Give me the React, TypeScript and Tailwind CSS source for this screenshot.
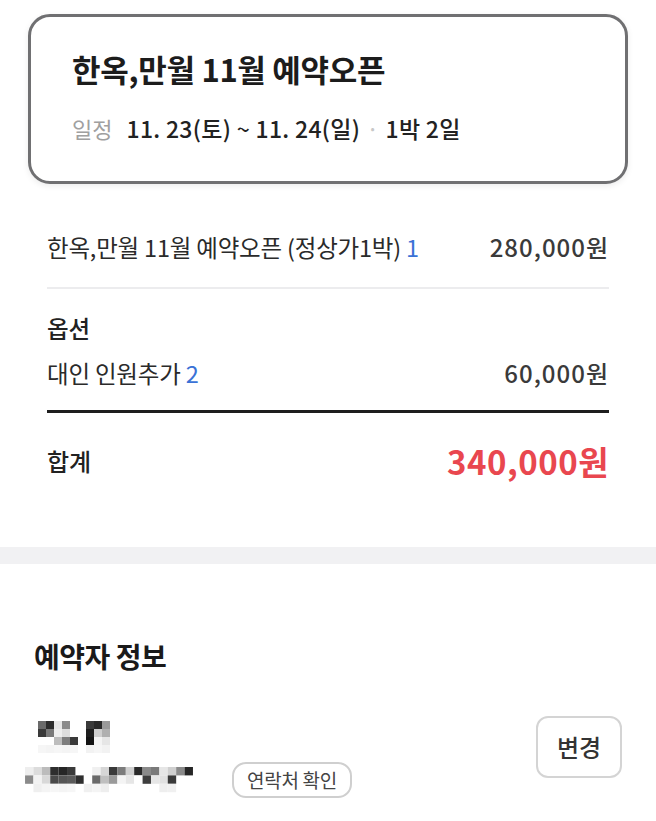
import React from 'react';

const FONT = '"Noto Sans CJK KR", "Noto Sans", sans-serif';

// mosaic cells: [col, row, color]
const nameCells: [number, number, string][] = [
  [0, 0, '#6a6a6a'], [1, 0, '#2c2c2c'], [2, 0, '#e6e6e6'], [3, 0, '#8a8a8a'], [6, 0, '#3a3a3a'], [7, 0, '#2a2a2a'], [8, 0, '#9a9a9a'],
  [0, 1, '#3a3a3a'], [1, 1, '#7a7a7a'], [2, 1, '#eeeeee'], [3, 1, '#dddddd'], [6, 1, '#1e1e1e'], [7, 1, '#cfcfcf'], [8, 1, '#b0b0b0'],
  [2, 2, '#bdbdbd'], [3, 2, '#7d7d7d'], [4, 2, '#3a3a3a'], [6, 2, '#141414'], [7, 2, '#f4f4f4'], [8, 2, '#e6e6e6'],
  [0, 3, '#f6f6f6'], [1, 3, '#f4f4f4'], [2, 3, '#f6f6f6'], [3, 3, '#f4f4f4'], [4, 3, '#f6f6f6'], [6, 3, '#f2f2f2'], [7, 3, '#f6f6f6'], [8, 3, '#f2f2f2'],
];

const phoneCells: [number, number, string][] = [
  [0, 0, '#eeeeee'], [1, 0, '#dcdcdc'], [2, 0, '#bcbcbc'], [3, 0, '#2e2e2e'], [4, 0, '#262626'], [5, 0, '#3a3a3a'], [8, 0, '#f0f0f0'], [9, 0, '#d6d6d6'],
  [10, 0, '#3a3a3a'], [11, 0, '#7c7c7c'], [12, 0, '#d0d0d0'], [13, 0, '#2a2a2a'], [14, 0, '#8a8a8a'], [15, 0, '#7a7a7a'], [16, 0, '#e6e6e6'], [17, 0, '#cfcfcf'], [18, 0, '#8a8a8a'], [19, 0, '#262626'],
  [0, 1, '#8a8a8a'], [1, 1, '#f2f2f2'], [2, 1, '#d8d8d8'], [3, 1, '#4a4a4a'], [4, 1, '#555555'], [5, 1, '#5a5a5a'], [6, 1, '#2e2e2e'], [7, 1, '#ffffff'], [8, 1, '#6a6a6a'], [9, 1, '#bfbfbf'],
  [10, 1, '#9a9a9a'], [11, 1, '#f4f4f4'], [12, 1, '#e6e6e6'], [13, 1, '#ffffff'], [14, 1, '#3e3e3e'], [15, 1, '#e6e6e6'], [16, 1, '#e0e0e0'], [17, 1, '#3a3a3a'],
  [1, 2, '#efefef'], [2, 2, '#f4f4f4'], [3, 2, '#f6f6f6'], [4, 2, '#f4f4f4'], [5, 2, '#f6f6f6'], [7, 2, '#f0f0f0'], [8, 2, '#f4f4f4'], [9, 2, '#eeeeee'], [16, 2, '#eeeeee'], [17, 2, '#f0f0f0'],
];

function Mosaic({ cells, cols, rows, cell }: { cells: [number, number, string][]; cols: number; rows: number; cell: number }) {
  return (
    <svg width={cols * cell} height={rows * cell} viewBox={`0 0 ${cols * cell} ${rows * cell}`} aria-hidden>
      {cells.map(([c, r, color], i) => (
        <rect key={i} x={c * cell} y={r * cell} width={cell} height={cell} fill={color} />
      ))}
    </svg>
  );
}

export default function App() {
  return (
    <div className="w-[656px] min-h-[821px] bg-white text-[#222]" style={{ fontFamily: FONT }}>
      {/* product card */}
      <div className="pt-[14px] px-[28px]">
        <div className="h-[170px] rounded-[22px] border-[3px] border-[#707072] pl-[41px] pt-[30px] shadow-[0_2px_6px_rgba(0,0,0,0.08)]">
          <h1 className="text-[31px] font-bold leading-[44px] tracking-[-0.3px] text-[#1c1c1c]">한옥,만월 11월 예약오픈</h1>
          <div className="mt-[21px] flex items-center text-[23px] leading-[32px] tracking-[0.3px]">
            <span className="text-[22px] tracking-normal text-[#a0a0a0]">일정</span>
            <span className="ml-[14px] font-medium text-[#222]">11. 23(토) ~ 11. 24(일)</span>
            <span className="mx-[6px] text-[#c8c8c8]">·</span>
            <span className="font-medium text-[#222]">1박 2일</span>
          </div>
        </div>
      </div>

      {/* price breakdown */}
      <div className="px-[47px] pt-[47px] pb-[66px]">
        <div className="flex items-center justify-between text-[23.5px] leading-[32px] tracking-[-0.2px]">
          <span className="text-[#2a2a2a]">
            한옥,만월 11월 예약오픈 (정상가1박) <span className="text-[#3a72d6]">1</span>
          </span>
          <span className="text-[24px] font-medium tracking-[1px] text-[#3a3a3a]">280,000원</span>
        </div>
        <div className="mt-[24px] h-[2px] bg-[#ececee]" />
        <div className="mt-[23px] text-[23.5px] leading-[32px] font-medium text-[#222]">옵션</div>
        <div className="mt-[13px] flex items-center justify-between text-[23.5px] leading-[32px] tracking-[-0.2px]">
          <span className="text-[#2a2a2a]">
            대인 인원추가 <span className="text-[#3a72d6]">2</span>
          </span>
          <span className="text-[24px] font-medium tracking-[1px] text-[#3a3a3a]">60,000원</span>
        </div>
        <div className="mt-[21px] h-[3px] bg-[#1e1e1e]" />
        <div className="mt-[28px] flex items-center justify-between">
          <span className="text-[24px] leading-[40px] font-medium text-[#222]">합계</span>
          <span className="text-[33px] leading-[40px] font-semibold tracking-[0.5px] text-[#e9474f]">340,000원</span>
        </div>
      </div>

      <div className="h-[17px] bg-[#f1f1f3]" />

      {/* booker info */}
      <div className="px-[34px] pt-[74px]">
        <h2 className="text-[28px] leading-[36px] font-bold tracking-[-0.5px] text-[#1a1a1a]">예약자 정보</h2>
        <div className="mt-[44px] flex items-start justify-between">
          <div className="flex flex-col">
            <div className="ml-[4px] mt-[3px]">
              <Mosaic cells={nameCells} cols={9} rows={4} cell={8} />
            </div>
            <div className="mt-[9px] flex items-center">
              <div className="-ml-[9px]">
                <Mosaic cells={phoneCells} cols={20} rows={3} cell={8.4} />
              </div>
              <button className="ml-[39px] w-[120px] h-[36px] rounded-[14px] border-2 border-[#cfcfcf] bg-white text-[19px] leading-[32px] text-[#444] tracking-[-0.3px]">
                연락처 확인
              </button>
            </div>
          </div>
          <button className="mt-[-2px] w-[86px] h-[62px] rounded-[12px] border-2 border-[#d4d4d4] bg-white text-[24px] font-medium text-[#333]">
            변경
          </button>
        </div>
      </div>
    </div>
  );
}
